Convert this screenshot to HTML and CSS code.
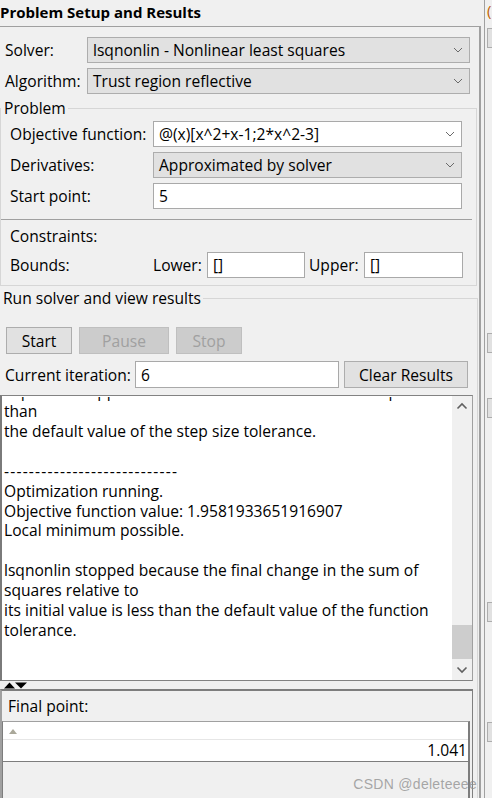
FILE: index.html
```html
<!DOCTYPE html>
<html>
<head>
<meta charset="utf-8">
<link rel="stylesheet" href="styles.css">
</head>
<body>
<div class="app">
  <div class="main">
    <div class="title">Problem Setup and Results</div>
    <div class="panel">
      <div class="row">
        <span class="lbl lbl-top">Solver:</span>
        <div class="select sel-top"><span class="val">lsqnonlin - Nonlinear least squares</span><svg class="chev" width="10" height="6" viewBox="0 0 10 6"><path d="M1 1 L5 5 L9 1" fill="none" stroke="#6a6a6a" stroke-width="1"/></svg></div>
      </div>
      <div class="row row-gap">
        <span class="lbl lbl-top">Algorithm:</span>
        <div class="select sel-top"><span class="val">Trust region reflective</span><svg class="chev" width="10" height="6" viewBox="0 0 10 6"><path d="M1 1 L5 5 L9 1" fill="none" stroke="#6a6a6a" stroke-width="1"/></svg></div>
      </div>

      <fieldset class="fs fs-problem">
        <legend>Problem</legend>
        <div class="row">
          <span class="lbl lbl-in">Objective function:</span>
          <div class="combo"><span class="val">@(x)[x^2+x-1;2*x^2-3]</span><svg class="chev" width="10" height="6" viewBox="0 0 10 6"><path d="M1 1 L5 5 L9 1" fill="none" stroke="#6a6a6a" stroke-width="1"/></svg></div>
        </div>
        <div class="row row-gap">
          <span class="lbl lbl-in">Derivatives:</span>
          <div class="select sel-in"><span class="val">Approximated by solver</span><svg class="chev" width="10" height="6" viewBox="0 0 10 6"><path d="M1 1 L5 5 L9 1" fill="none" stroke="#6a6a6a" stroke-width="1"/></svg></div>
        </div>
        <div class="row row-gap">
          <span class="lbl lbl-in">Start point:</span>
          <div class="input in-wide">5</div>
        </div>
        <div class="sep"></div>
        <div class="row-text">Constraints:</div>
        <div class="row row-bounds">
          <span class="lbl lbl-in">Bounds:</span>
          <span class="lbl lbl-lower">Lower:</span>
          <div class="input in-bound">[]</div>
          <span class="lbl lbl-upper">Upper:</span>
          <div class="input in-bound">[]</div>
        </div>
      </fieldset>

      <fieldset class="fs fs-run">
        <legend>Run solver and view results</legend>
        <div class="btn-row">
          <div class="btn btn-start">Start</div>
          <div class="btn btn-dis btn-pause">Pause</div>
          <div class="btn btn-dis btn-stop">Stop</div>
        </div>
        <div class="iter-row">
          <span class="lbl lbl-iter">Current iteration:</span>
          <div class="input in-iter">6</div>
          <div class="btn btn-clear">Clear Results</div>
        </div>
        <div class="textarea">
          <div class="ta-text">
            <div class="cut"><div class="cut-line">lsqnonlin stopped because the size of the current step is less</div></div>
            <div class="ta-lines">than
the default value of the step size tolerance.

<span class="dash">----------------------------</span>
Optimization running.
Objective function value: 1.9581933651916907
Local minimum possible.

lsqnonlin stopped because the final change in the sum of
squares relative to
its initial value is less than the default value of the function
tolerance.</div>
          </div>
          <div class="vscroll">
            <div class="sb-arrow"><svg width="12" height="8" viewBox="0 0 12 8"><path d="M1.5 6.5 L6 2 L10.5 6.5" fill="none" stroke="#606060" stroke-width="1.6"/></svg></div>
            <div class="sb-track"><div class="sb-thumb"></div></div>
            <div class="sb-arrow"><svg width="12" height="8" viewBox="0 0 12 8"><path d="M1.5 1.5 L6 6 L10.5 1.5" fill="none" stroke="#606060" stroke-width="1.6"/></svg></div>
          </div>
        </div>
        <div class="splitter">
          <svg width="26" height="7" viewBox="0 0 26 7"><path d="M1 6.5 L6.5 0.5 L12 6.5 Z" fill="#000"/><path d="M12 0.5 L24 0.5 L18 6.5 Z" fill="#000"/></svg>
        </div>
        <div class="final">
          <div class="final-label">Final point:</div>
          <div class="table">
            <div class="t-head"><svg width="10" height="6" viewBox="0 0 10 6"><path d="M1 6 L5 1 L9 6 Z" fill="#aaa89a"/></svg></div>
            <div class="t-row">1.041</div>
          </div>
        </div>
      </fieldset>
    </div>
  </div>
  <div class="divider"></div>
  <div class="side">
    <div class="side-char">(</div>
    <div class="side-box sb1"></div>
    <div class="side-box sb2"></div>
    <div class="side-box sb3"></div>
    <div class="side-box sb4"></div>
    <div class="side-box sb5"></div>
  </div>
  <div class="watermark">CSDN @deleteeee</div>
</div>
</body>
</html>
```

FILE: styles.css
```css
* { box-sizing: border-box; }
html, body { margin: 0; padding: 0; }
body {
  background: #f0f0f0;
  font-family: "Open Sans", "Noto Sans", sans-serif;
  font-size: 15.6px;
  color: #000;
  width: 492px;
  height: 798px;
  overflow: hidden;
}
.app { display: flex; height: 798px; position: relative; }
.main { width: 481px; display: flex; flex-direction: column; }
.title {
  height: 26px;
  line-height: 24px;
  font-size: 15px;
  font-weight: bold;
  white-space: nowrap;
  padding-left: 0;
}
.panel {
  flex: 1;
  border-top: 1px solid #a0a0a0;
  border-right: 2px solid #a0a0a0;
  padding-top: 10px;
  overflow: hidden;
}
.row { display: flex; align-items: center; height: 26px; }
.row-gap { margin-top: 5px; }
.lbl { white-space: nowrap; line-height: 20px; }
.lbl-top { width: 87px; padding-left: 5px; flex: none; }
.select, .combo, .input {
  height: 26px;
  display: flex;
  align-items: center;
  padding-left: 5px;
  white-space: nowrap;
  flex: none;
}
.select { background: #e1e1e1; border: 1px solid #adadad; }
.combo, .input { background: #fff; border: 1px solid #a9a9a9; }
.val { flex: 1; }
.chev { margin-right: 6px; flex: none; }
.sel-top { width: 383px; }
.fs {
  margin: 0;
  padding: 0;
  border: 1px solid #d6d6d6;
  min-width: 0;
}
.fs legend {
  padding: 0 2px 0 3px;
  margin-left: 0;
  line-height: 20px;
  white-space: nowrap;
}
.fs-problem {
  margin-top: 4px;
  width: 477px;
  padding: 3px 0 7px 0;
}
.lbl-in { width: 152px; padding-left: 9px; flex: none; }
.combo, .sel-in, .in-wide { width: 309px; }
.sep { height: 1px; background: #a0a0a0; margin: 10px 4px 0 0; }
.row-text { line-height: 20px; height: 20px; margin-top: 6px; padding-left: 9px; }
.row-bounds { margin-top: 6px; }
.lbl-lower { width: 54px; flex: none; }
.lbl-upper { width: 59px; padding-left: 4px; flex: none; }
.in-bound { width: 98px; }
.in-bound:last-child { width: 99px; }

.fs-run {
  margin-top: 2px;
  width: 478px;
  border-left: 0;
  border-bottom: 0;
  padding: 0;
}
.fs-run legend { margin-left: 0; }
.btn-row { display: flex; gap: 7px; margin-top: 19px; padding-left: 6px; }
.btn {
  height: 27px;
  display: flex;
  align-items: center;
  justify-content: center;
  white-space: nowrap;
  background: #e1e1e1;
  border: 1px solid #adadad;
  flex: none;
}
.btn-start { width: 66px; }
.btn-pause { width: 90px; }
.btn-stop { width: 66px; }
.btn-dis { background: #cccccc; border-color: #bfbfbf; color: #a0a0a0; }
.iter-row { display: flex; align-items: center; margin-top: 7px; padding-left: 5px; }
.lbl-iter { width: 130px; flex: none; }
.in-iter { width: 204px; height: 27px; }
.btn-clear { width: 124px; margin-left: 5px; }

.textarea {
  margin-top: 7px;
  width: 473px;
  height: 286px;
  background: #fff;
  border-top: 1px solid #828282;
  border-left: 2px solid #7a7a7a;
  border-bottom: 1px solid #828282;
  border-right: 1px solid #a0a0a0;
  display: flex;
}
.ta-text { flex: 1; overflow: hidden; padding-left: 2px; padding-top: 1px; }
.cut { height: 4px; overflow: hidden; display: flex; align-items: flex-end; }
.cut-line { white-space: pre; line-height: 20px; height: 20px; flex: none; }
.ta-lines {
  white-space: pre;
  line-height: 19.9px;
  margin-top: 1px;
}
.dash { letter-spacing: 1.2px; }
.vscroll {
  width: 20px;
  flex: none;
  background: #f0f0f0;
  display: flex;
  flex-direction: column;
}
.sb-arrow { height: 20px; display: flex; align-items: center; justify-content: center; }
.sb-track { flex: 1; display: flex; flex-direction: column; justify-content: flex-end; }
.sb-thumb { height: 34px; background: #cdcdcd; margin: 0 0 1px 0; }

.splitter { height: 8px; padding-left: 3px; display: flex; align-items: flex-start; padding-top: 1px; }
.splitter svg { display: block; }
.final {
  width: 473px;
  height: 120px;
  border-top: 2px solid #7d7d7d;
  border-left: 2px solid #a0a0a0;
  border-right: 1px solid #808080;
}
.final-label { height: 30px; line-height: 30px; padding-left: 6px; }
.table {
  height: 90px;
  width: 468px;
  border-left: 1px solid #7d7d7d;
  border-right: 2px solid #7d7d7d;
  border-top: 1px solid #a0a0a0;
}
.t-head {
  height: 18px;
  background: #fff;
  border-bottom: 1px solid #e6e6e6;
  display: flex;
  align-items: center;
  padding-left: 5px;
}
.t-row {
  height: 22px;
  background: #fff;
  border-bottom: 1px solid #7d7d7d;
  text-align: right;
  padding-right: 1px;
  line-height: 21px;
}

.divider { width: 4px; border-right: 1px solid #a0a0a0; flex: none; }
.side { width: 7px; flex: none; display: flex; flex-direction: column; padding-left: 2px; overflow: hidden; }
.side-char { height: 28px; line-height: 20px; color: #c06000; font-size: 15px; }
.side-box { height: 20px; background: #e1e1e1; border: 1px solid #adadad; border-right: 0; flex: none; }
.sb2 { margin-top: 285px; }
.sb3 { margin-top: 45px; }
.sb4 { margin-top: 184px; }
.sb5 { margin-top: 100px; }
.watermark {
  position: absolute;
  right: 15px;
  bottom: 6px;
  font-family: "Liberation Sans", Arial, sans-serif;
  font-size: 14px;
  color: rgba(140, 140, 140, 0.75);
  letter-spacing: 0.3px;
}
```
